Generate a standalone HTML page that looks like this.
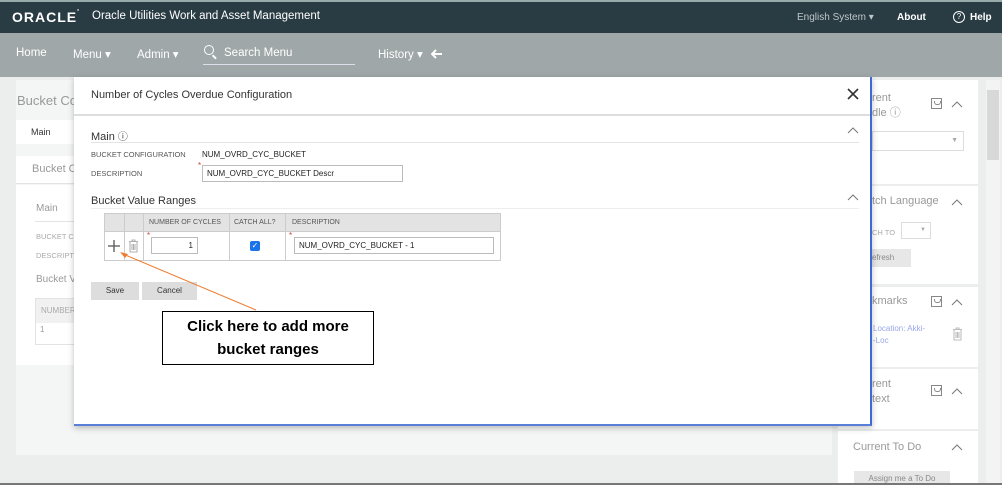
<!DOCTYPE html>
<html><head><meta charset="utf-8"><style>
*{box-sizing:border-box;margin:0;padding:0}
body{width:1002px;height:485px;overflow:hidden;background:#eceeee;font-family:"Liberation Sans",sans-serif;position:relative;font-size:11px;color:#333}
.abs{position:absolute}
.hdr{left:0;top:0;width:1002px;height:33px;background:#293b43;color:#fff;border-top:2px solid #9aa}
.nav{left:0;top:33px;width:1002px;height:44px;background:#9fa7a9;color:#fff;font-size:11.5px}
.lbl{font-size:7.5px;color:#555}
.inp{border:1px solid #bbb;background:#fff;height:17px;font-size:8px;padding:3px 4px;color:#222}
.card{background:#fff;left:838px;width:140px}
.gtxt{color:#999;font-size:11px}
.chev{position:absolute;width:12px;height:8px}
.box{position:absolute;width:11px;height:11px;border:1px solid #888}
.box:after{content:"";position:absolute;left:2px;top:2px;width:5px;height:3px;border:1px solid #888;border-top:none;border-radius:0 0 3px 3px}
</style></head><body>
<svg width="0" height="0" style="position:absolute"><defs><symbol id="ch" viewBox="0 0 12 8"><polyline points="1,7 6,2 11,7" fill="none" stroke="#777" stroke-width="1"/></symbol></defs></svg>
<div class="abs hdr">
 <div class="abs" style="left:12px;top:7px;font-size:14px;letter-spacing:1px;font-weight:bold">ORACLE<span style="font-size:5px;vertical-align:top">°</span></div>
 <div class="abs" style="left:92px;top:8px;font-size:11.5px">Oracle Utilities Work and Asset Management</div>
 <div class="abs" style="left:797px;top:10px;font-size:10px;color:#bfc6c9">English System ▾</div>
 <div class="abs" style="left:897px;top:10px;font-size:10px;font-weight:bold">About</div>
 <div class="abs" style="left:953px;top:9px;width:12px;height:12px;border:1px solid #fff;border-radius:50%;font-size:8px;text-align:center;line-height:10px">?</div>
 <div class="abs" style="left:970px;top:10px;font-size:10px;font-weight:bold">Help</div>
</div>
<div class="abs nav">
 <div class="abs" style="left:16px;top:14px">Home</div>
 <div class="abs" style="left:73px;top:14px">Menu ▾</div>
 <div class="abs" style="left:137px;top:14px">Admin ▾</div>
 <div class="abs" style="left:204px;top:12px;width:10px;height:10px;border:1.5px solid #fff;border-radius:50%"></div>
 <div class="abs" style="left:212px;top:23px;width:5px;height:1.5px;background:#fff;transform:rotate(45deg)"></div>
 <div class="abs" style="left:224px;top:14px">Search Menu</div>
 <div class="abs" style="left:203px;top:31px;width:152px;height:1px;background:#dde"></div>
 <div class="abs" style="left:378px;top:14px">History ▾</div>
 <svg class="abs" style="left:431px;top:16px" width="12" height="10"><path d="M11 5H2M5 1L1 5L5 9" stroke="#fff" stroke-width="2" fill="none"/></svg>
</div>
<div class="abs" style="left:16px;top:80px;width:816px;height:375px;background:#f4f5f5"></div>
<div class="abs gtxt" style="left:17px;top:93px;font-size:13px">Bucket Co</div>
<div class="abs" style="left:16px;top:120px;width:60px;height:24px;background:#fff;border-right:1px solid #ddd;font-size:9px;padding:7px 15px">Main</div>
<div class="abs" style="left:16px;top:156px;width:816px;height:28px;background:#fff;border-bottom:1px solid #e3e3e3"><span class="gtxt" style="position:absolute;left:16px;top:7px;font-size:11px">Bucket C</span></div>
<div class="abs" style="left:16px;top:185px;width:816px;height:180px;background:#fff">
 <div class="abs gtxt" style="left:20px;top:18px;font-size:10px">Main</div>
 <div class="abs" style="left:19px;top:36px;width:60px;height:1px;background:#e3e3e3"></div>
 <div class="abs lbl" style="left:20px;top:47px;color:#aaa">BUCKET C</div>
 <div class="abs lbl" style="left:20px;top:66px;color:#aaa">DESCRIPT</div>
 <div class="abs gtxt" style="left:20px;top:89px;font-size:10px">Bucket V</div>
 <div class="abs" style="left:19px;top:113px;width:60px;height:47px;border:1px solid #e3e3e3"></div>
 <div class="abs" style="left:20px;top:114px;width:58px;height:24px;background:#f1f1f1;font-size:8px;color:#aaa;padding:7px 5px">NUMBER</div>
 <div class="abs" style="left:24px;top:140px;font-size:8px;color:#999">1</div>
</div>
<div class="abs" style="left:838px;top:80px;width:147px;height:405px;background:#eceeee"></div>
<div class="abs card" style="top:80px;height:104px"></div>
<div class="abs gtxt" style="left:872px;top:91px;line-height:15px">rent<br>dle ⓘ</div>
<div class="box" style="left:931px;top:98px"></div>
<svg class="chev" style="left:951px;top:100px"><use href="#ch"/></svg>
<div class="abs" style="left:872px;top:131px;width:92px;height:20px;border:1px solid #ddd;background:#fff;font-size:7px;color:#aaa;text-align:right;padding:5px 5px">▼</div>
<div class="abs card" style="top:186px;height:98px"></div>
<div class="abs gtxt" style="left:872px;top:195px">tch Language</div>
<svg class="chev" style="left:951px;top:198px"><use href="#ch"/></svg>
<div class="abs lbl" style="left:872px;top:228px;color:#aaa">CH TO</div>
<div class="abs" style="left:901px;top:222px;width:30px;height:17px;border:1px solid #ddd;font-size:6px;color:#aaa;text-align:right;padding:4px">▼</div>
<div class="abs" style="left:872px;top:249px;width:39px;height:18px;background:#e7e7e7;font-size:8px;color:#888;padding:4px 0">efresh</div>
<div class="abs card" style="top:287px;height:80px"></div>
<div class="abs gtxt" style="left:872px;top:295px">kmarks</div>
<div class="box" style="left:931px;top:296px"></div>
<svg class="chev" style="left:951px;top:298px"><use href="#ch"/></svg>
<div class="abs" style="left:873px;top:323px;font-size:8px;color:#9aa6e8;line-height:12px">Location: Akki-<br>-Loc</div>
<svg class="abs" style="left:952px;top:327px" width="11" height="14"><path d="M1 2.5H10M4 2.5V1H7V2.5M2 3V13H9V3M4 5V11M5.5 5V11M7 5V11" stroke="#aaa" fill="none" stroke-width="0.8"/></svg>
<div class="abs card" style="top:369px;height:60px"></div>
<div class="abs gtxt" style="left:872px;top:377px;line-height:15px">rent<br>text</div>
<div class="box" style="left:931px;top:385px"></div>
<svg class="chev" style="left:951px;top:387px"><use href="#ch"/></svg>
<div class="abs card" style="top:431px;height:54px"></div>
<div class="abs gtxt" style="left:853px;top:441px">Current To Do</div>
<svg class="chev" style="left:951px;top:443px"><use href="#ch"/></svg>
<div class="abs" style="left:854px;top:471px;width:96px;height:14px;background:#e7e7e7;font-size:8px;color:#888;text-align:center;padding-top:3px">Assign me a To Do</div>
<div class="abs" style="left:986px;top:80px;width:14px;height:405px;background:#f3f3f3"></div>
<div class="abs" style="left:987px;top:90px;width:12px;height:70px;background:#d8d8d8"></div>
<div class="abs" style="left:0;top:483px;width:1002px;height:2px;background:#777"></div>
<div class="abs" style="left:74px;top:77px;width:798px;height:349px;background:#fff;border-right:2px solid #3c6bd6;border-bottom:2px solid #5a7fd8;box-shadow:0 2px 6px rgba(0,0,0,.25)">
 <div class="abs" style="left:17px;top:12px;font-size:11px;color:#333">Number of Cycles Overdue Configuration</div>
 <svg class="abs" style="left:773px;top:11px" width="12" height="12"><path d="M1 1L11 11M11 1L1 11" stroke="#333" stroke-width="1.6"/></svg>
 <div class="abs" style="left:0;top:37px;width:796px;height:2px;background:#ddd"></div>
 <div class="abs" style="left:17px;top:51px;font-size:11px">Main <span style="font-size:10px">ⓘ</span></div>
 <svg class="chev" style="left:773px;top:49px"><use href="#ch"/></svg>
 <div class="abs" style="left:17px;top:65px;width:768px;height:1px;background:#e3e3e3"></div>
 <div class="abs lbl" style="left:17px;top:73px">BUCKET CONFIGURATION</div>
 <div class="abs" style="left:128px;top:73px;font-size:8px;color:#222">NUM_OVRD_CYC_BUCKET</div>
 <div class="abs lbl" style="left:17px;top:92px">DESCRIPTION</div>
 <div class="abs" style="left:124px;top:84px;color:#c43;font-size:8px">*</div>
 <div class="abs inp" style="left:128px;top:88px;width:201px">NUM_OVRD_CYC_BUCKET Descr</div>
 <div class="abs" style="left:17px;top:118px;font-size:11px">Bucket Value Ranges</div>
 <svg class="chev" style="left:773px;top:116px"><use href="#ch"/></svg>
 <div class="abs" style="left:17px;top:131px;width:768px;height:1px;background:#eee"></div>
 <div class="abs" style="left:30px;top:136px;width:397px;height:48px;border:1px solid #ccc;background:#fff"></div>
 <div class="abs" style="left:31px;top:137px;width:395px;height:18px;background:#e3e3e3;border-bottom:1px solid #ccc"></div>
 <div class="abs" style="left:50px;top:137px;width:1px;height:46px;background:#ccc"></div>
 <div class="abs" style="left:69px;top:137px;width:1px;height:46px;background:#ccc"></div>
 <div class="abs" style="left:155px;top:137px;width:1px;height:46px;background:#ccc"></div>
 <div class="abs" style="left:211px;top:137px;width:1px;height:46px;background:#ccc"></div>
 <div class="abs lbl" style="left:75px;top:142px;font-size:7px">NUMBER OF CYCLES</div>
 <div class="abs lbl" style="left:160px;top:142px;font-size:7px">CATCH ALL?</div>
 <div class="abs lbl" style="left:218px;top:142px;font-size:7px">DESCRIPTION</div>
 <svg class="abs" style="left:34px;top:163px" width="12" height="12"><path d="M6 0V12M0 6H12" stroke="#555" stroke-width="1.3"/></svg>
 <svg class="abs" style="left:54px;top:162px" width="11" height="14"><path d="M1 2.5H10M4 2.5V1H7V2.5M2 3V13H9V3M4 5V11M5.5 5V11M7 5V11" stroke="#999" fill="none" stroke-width="0.8"/></svg>
 <div class="abs" style="left:73px;top:154px;color:#c43;font-size:8px">*</div>
 <div class="abs inp" style="left:77px;top:160px;width:47px;text-align:right">1</div>
 <div class="abs" style="left:176px;top:164px;width:10px;height:10px;background:#1a73e8;border-radius:2px;color:#fff;font-size:8px;line-height:10px;text-align:center">✓</div>
 <div class="abs" style="left:215px;top:154px;color:#c43;font-size:8px">*</div>
 <div class="abs inp" style="left:220px;top:160px;width:200px">NUM_OVRD_CYC_BUCKET - 1</div>
 <div class="abs" style="left:17px;top:205px;width:48px;height:18px;background:#ddd;font-size:8px;text-align:center;padding-top:4px">Save</div>
 <div class="abs" style="left:68px;top:205px;width:55px;height:18px;background:#ddd;font-size:8px;text-align:center;padding-top:4px">Cancel</div>
 <div class="abs" style="left:88px;top:234px;width:212px;height:54px;border:1px solid #000;background:#fff;font-size:15px;font-weight:bold;text-align:center;line-height:23px;padding-top:3px;color:#000">Click here to add more<br>bucket ranges</div>
 <svg class="abs" style="left:40px;top:170px" width="150" height="70"><line x1="142" y1="63" x2="9" y2="7" stroke="#ed7d31" stroke-width="1"/><polygon points="6,5 14,7 11,11" fill="#ed7d31"/></svg>
</div>
</body></html>
